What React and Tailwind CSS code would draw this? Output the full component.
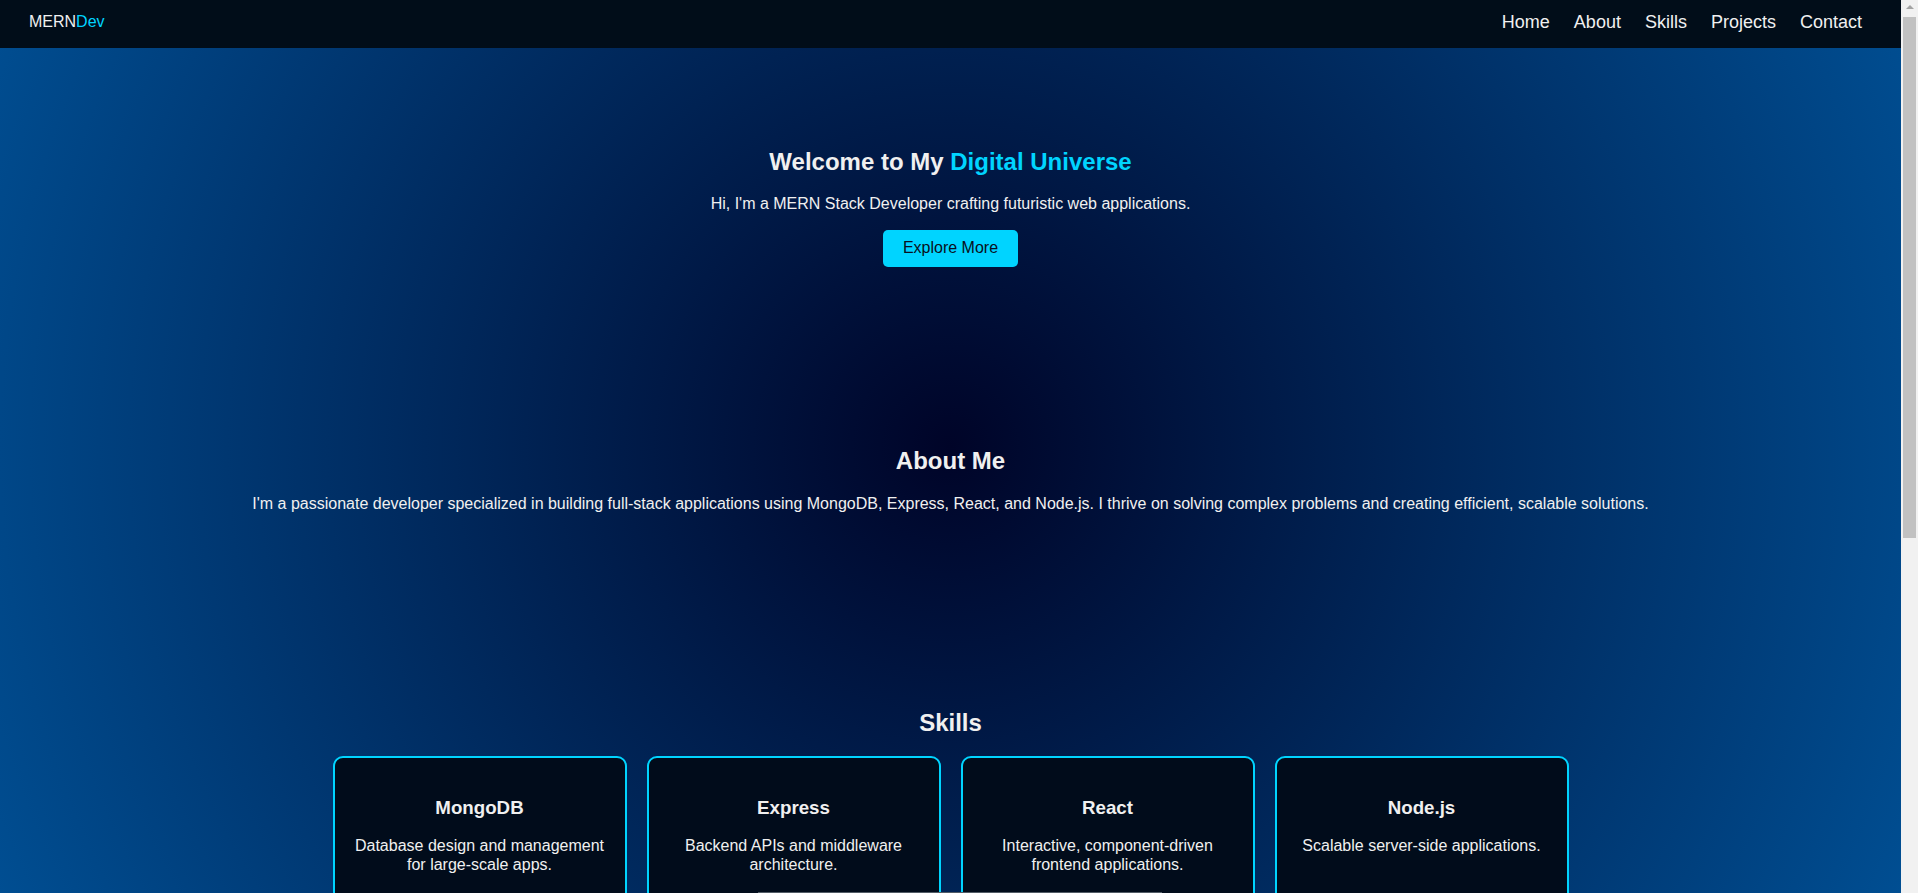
const links = ['Home', 'About', 'Skills', 'Projects', 'Contact'];

const skills = [
  { name: 'MongoDB', text: 'Database design and management for large-scale apps.' },
  { name: 'Express', text: 'Backend APIs and middleware architecture.' },
  { name: 'React', text: 'Interactive, component-driven frontend applications.' },
  { name: 'Node.js', text: 'Scalable server-side applications.' },
];

function Heading({ children }) {
  return <h2 className="text-2xl font-bold leading-[1.15] my-[19.92px]">{children}</h2>;
}

// classic browser scrollbar as seen in the screenshot
function Scrollbar() {
  return (
    <div className="w-[17px] h-full shrink-0 flex flex-col bg-[#f1f1f1]">
      <div className="h-[17px] flex justify-center pt-[5px]">
        <div className="w-0 h-0 border-x-[4px] border-b-[4px] border-x-transparent border-b-[#a3a3a3]" />
      </div>
      <div className="mx-[2px] h-[521px] bg-[#c1c1c1]" />
    </div>
  );
}

export default function App() {
  return (
    <div className="h-screen flex font-['Liberation_Sans',Arial,sans-serif] text-[#f0f0f0]">
      <div className="flex-1 min-w-0 h-full overflow-y-auto [scrollbar-width:none] bg-[radial-gradient(circle,#000428,#004e92)]">
        <nav className="sticky top-0 z-10 h-12 pb-1 pl-[29px] pr-[39px] flex items-center justify-between bg-[#010d19]">
          <div className="text-base leading-[1.15]">
            MERN<span className="text-[#00d4ff]">Dev</span>
          </div>
          <ul className="flex gap-6 text-lg leading-[1.15]">
            {links.map(l => (
              <li key={l}><a href={`#${l.toLowerCase()}`}>{l}</a></li>
            ))}
          </ul>
        </nav>

        <main>
          <section id="home" className="py-20 px-5 text-center">
            <Heading>
              Welcome to My <span className="text-[#00d4ff]">Digital Universe</span>
            </Heading>
            <p className="text-base leading-[1.15] mb-4">Hi, I'm a MERN Stack Developer crafting futuristic web applications.</p>
            <div className="flex justify-center">
              <button className="px-5 py-[9.5px] text-base leading-[1.15] rounded-[5px] bg-[#00d4ff] text-[#0a1020]">Explore More</button>
            </div>
          </section>

          <section id="about" className="py-20 px-5 text-center">
            <Heading>About Me</Heading>
            <p className="text-base leading-[1.15] mb-4">
              I'm a passionate developer specialized in building full-stack applications using MongoDB, Express, React, and Node.js. I thrive on solving complex problems and creating efficient, scalable solutions.
            </p>
          </section>

          <section id="skills" className="py-20 px-5 text-center">
            <Heading>Skills</Heading>
            <div className="flex flex-wrap justify-center gap-5">
              {skills.map(s => (
                <div key={s.name} className="w-[294px] p-5 border-2 border-[#00d4ff] rounded-[10px] bg-[#010c1b]">
                  <h3 className="text-[18.72px] font-bold leading-[1.15] my-[18.72px]">{s.name}</h3>
                  <p className="text-base leading-[1.15] mb-4">{s.text}</p>
                </div>
              ))}
            </div>
          </section>

          <section id="projects" className="py-20 px-5 text-center">
            <Heading>Projects</Heading>
            <p className="text-base leading-[1.15] mb-4">A selection of full-stack applications built with the MERN stack.</p>
          </section>

          <section id="contact" className="py-12 px-5 text-center">
            <Heading>Contact</Heading>
            <p className="text-base leading-[1.15] mb-4">Let's build something amazing together.</p>
          </section>
        </main>
      </div>

      <Scrollbar />

      <div className="fixed bottom-0 left-[758px] w-[404px] h-px bg-[#525c66]" />
    </div>
  );
}
